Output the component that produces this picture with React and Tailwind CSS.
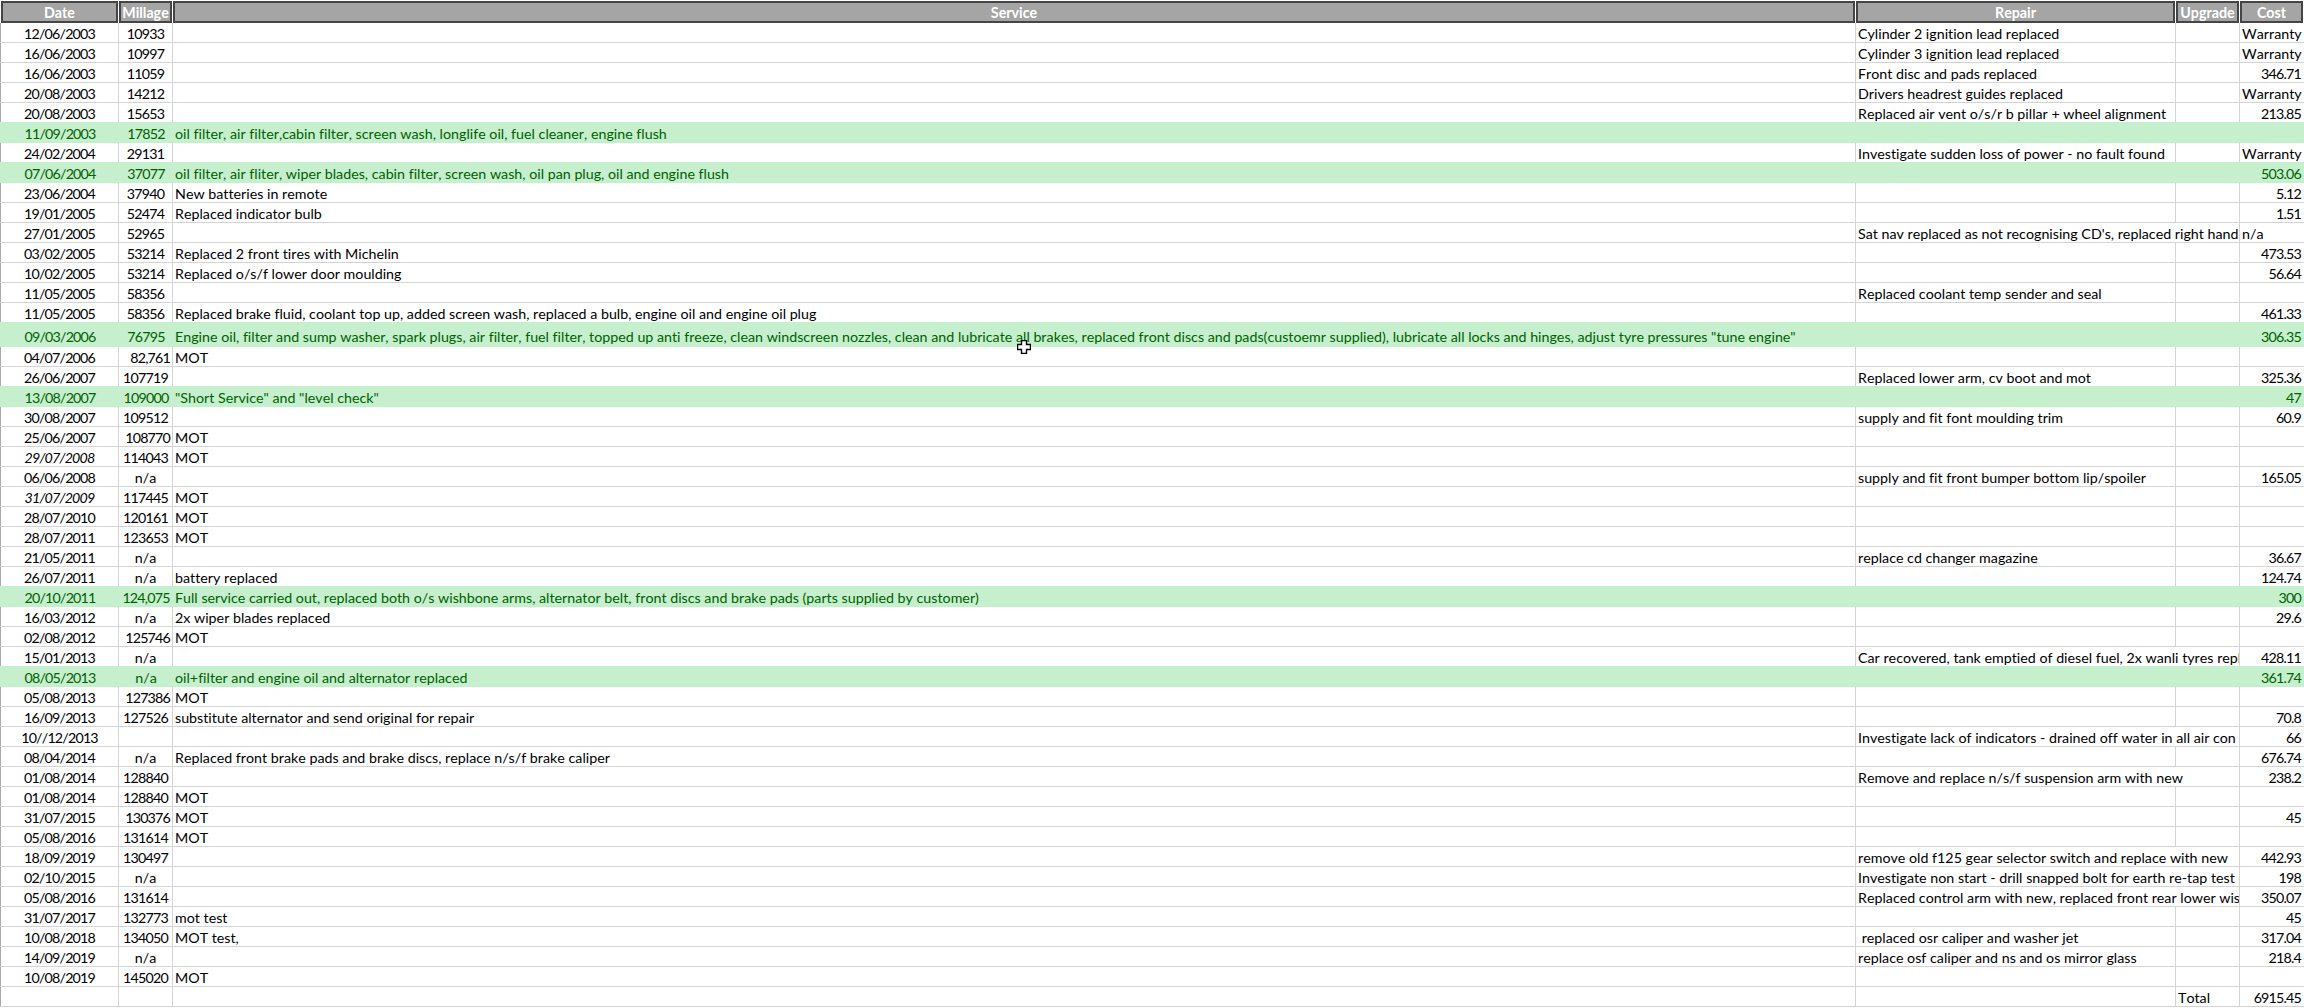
const COLS = 'grid grid-cols-[119px_54px_1683px_320px_64px_64px]';
const NUM = 'tracking-[-0.8px]';

// date, millage, service, repair, upgrade, cost + flags
const rows = [
  { d: '12/06/2003', m: '10933', r: 'Cylinder 2 ignition lead replaced', c: 'Warranty', cl: true },
  { d: '16/06/2003', m: '10997', r: 'Cylinder 3 ignition lead replaced', c: 'Warranty', cl: true },
  { d: '16/06/2003', m: '11059', r: 'Front disc and pads replaced', c: '346.71' },
  { d: '20/08/2003', m: '14212', r: 'Drivers headrest guides replaced', c: 'Warranty', cl: true },
  { d: '20/08/2003', m: '15653', r: 'Replaced air vent o/s/r b pillar + wheel alignment', c: '213.85' },
  { d: '11/09/2003', m: '17852', s: 'oil filter, air filter,cabin filter, screen wash, longlife oil, fuel cleaner, engine flush', good: true },
  { d: '24/02/2004', m: '29131', r: 'Investigate sudden loss of power - no fault found', c: 'Warranty', cl: true },
  { d: '07/06/2004', m: '37077', s: 'oil filter, air fliter, wiper blades, cabin filter, screen wash, oil pan plug, oil and engine flush', c: '503.06', good: true },
  { d: '23/06/2004', m: '37940', s: 'New batteries in remote', c: '5.12' },
  { d: '19/01/2005', m: '52474', s: 'Replaced indicator bulb', c: '1.51' },
  { d: '27/01/2005', m: '52965', r: "Sat nav replaced as not recognising CD's, replaced right hand lock", span: true, c: 'n/a', cl: true },
  { d: '03/02/2005', m: '53214', s: 'Replaced 2 front tires with Michelin', c: '473.53' },
  { d: '10/02/2005', m: '53214', s: 'Replaced o/s/f lower door moulding', c: '56.64' },
  { d: '11/05/2005', m: '58356', r: 'Replaced coolant temp sender and seal' },
  { d: '11/05/2005', m: '58356', s: 'Replaced brake fluid, coolant top up, added screen wash, replaced a bulb, engine oil and engine oil plug', c: '461.33' },
  { d: '09/03/2006', m: '76795', s: 'Engine oil, filter and sump washer, spark plugs, air filter, fuel filter, topped up anti freeze, clean windscreen nozzles, clean and lubricate all brakes, replaced front discs and pads(custoemr supplied), lubricate all locks and hinges, adjust tyre pressures "tune engine"', c: '306.35', good: true, tall: true },
  { d: '04/07/2006', m: '82,761', mr: true, s: 'MOT' },
  { d: '26/06/2007', m: '107719', r: 'Replaced lower arm, cv boot and mot', c: '325.36' },
  { d: '13/08/2007', m: '109000', s: '"Short Service" and "level check"', c: '47', good: true },
  { d: '30/08/2007', m: '109512', r: 'supply and fit font moulding trim', c: '60.9' },
  { d: '25/06/2007', m: '108770', mr: true, s: 'MOT' },
  { d: '29/07/2008', it: true, m: '114043', s: 'MOT' },
  { d: '06/06/2008', m: 'n/a', r: 'supply and fit front bumper bottom lip/spoiler', c: '165.05' },
  { d: '31/07/2009', it: true, m: '117445', s: 'MOT' },
  { d: '28/07/2010', m: '120161', s: 'MOT' },
  { d: '28/07/2011', m: '123653', s: 'MOT' },
  { d: '21/05/2011', m: 'n/a', r: 'replace cd changer magazine', c: '36.67' },
  { d: '26/07/2011', m: 'n/a', s: 'battery replaced', c: '124.74' },
  { d: '20/10/2011', m: '124,075', s: 'Full service carried out, replaced both o/s wishbone arms, alternator belt, front discs and brake pads (parts supplied by customer)', c: '300', good: true },
  { d: '16/03/2012', m: 'n/a', s: '2x wiper blades replaced', c: '29.6' },
  { d: '02/08/2012', m: '125746', mr: true, s: 'MOT' },
  { d: '15/01/2013', m: 'n/a', r: 'Car recovered, tank emptied of diesel fuel, 2x wanli tyres replaced', span: true, c: '428.11' },
  { d: '08/05/2013', m: 'n/a', s: 'oil+filter and engine oil and alternator replaced', c: '361.74', good: true },
  { d: '05/08/2013', m: '127386', mr: true, s: 'MOT' },
  { d: '16/09/2013', m: '127526', s: 'substitute alternator and send original for repair', c: '70.8' },
  { d: '10//12/2013', m: '', r: 'Investigate lack of indicators - drained off water in all air con pipes', span: true, c: '66' },
  { d: '08/04/2014', m: 'n/a', s: 'Replaced front brake pads and brake discs, replace n/s/f brake caliper', c: '676.74' },
  { d: '01/08/2014', m: '128840', r: 'Remove and replace n/s/f suspension arm with new', span: true, c: '238.2' },
  { d: '01/08/2014', m: '128840', s: 'MOT' },
  { d: '31/07/2015', m: '130376', mr: true, s: 'MOT', c: '45' },
  { d: '05/08/2016', m: '131614', s: 'MOT' },
  { d: '18/09/2019', m: '130497', r: 'remove old f125 gear selector switch and replace with new', span: true, c: '442.93' },
  { d: '02/10/2015', m: 'n/a', r: 'Investigate non start - drill snapped bolt for earth re-tap test circuit', span: true, c: '198' },
  { d: '05/08/2016', m: '131614', r: 'Replaced control arm with new, replaced front rear lower wishbone', span: true, c: '350.07' },
  { d: '31/07/2017', m: '132773', s: 'mot test', c: '45' },
  { d: '10/08/2018', m: '134050', s: 'MOT test,', r: ' replaced osr caliper and washer jet', c: '317.04' },
  { d: '14/09/2019', m: 'n/a', r: 'replace osf caliper and ns and os mirror glass', c: '218.4' },
  { d: '10/08/2019', m: '145020', s: 'MOT' },
  { d: '', m: '', u: 'Total', c: '6915.45' },
];

function HeaderCell({ children }) {
  return (
    <div className="h-[22px] border-2 border-[#454545] bg-[#a5a5a5] text-center text-white font-bold leading-[19px] overflow-hidden whitespace-nowrap">
      {children}
    </div>
  );
}

function Cell({ className = '', line, children }) {
  return (
    <div className={`flex items-end overflow-hidden whitespace-pre leading-[17px] ${line ? 'border-r border-[#d4d4d4]' : ''} ${className}`}>
      {children}
    </div>
  );
}

function Row({ row, nextGood }) {
  const g = row.good;
  const height = row.tall ? 'h-6 pb-px' : 'h-5';
  const bottom = g || nextGood ? 'border-[#c6efce]' : 'border-[#d4d4d4]';
  return (
    <div className={`${COLS} ${height} border-b ${bottom} ${g ? 'bg-[#c6efce] text-[#006100]' : 'text-black'}`}>
      <Cell line={!g} className={`justify-center border-l ${NUM} ${g ? 'border-l-[#c6efce]' : 'border-l-[#a9a9a9]'}`}>
        <span className={row.it ? 'italic' : ''}>{row.d}</span>
      </Cell>
      <Cell line={!g} className={`${row.m === 'n/a' ? '' : NUM} ${row.mr ? 'justify-end pr-[2px]' : 'justify-center'}`}>{row.m}</Cell>
      <Cell line={!g} className="pl-[2px]">{row.s}</Cell>
      {row.span ? (
        <Cell line={!g} className="col-span-2 pl-[2px]">{row.r}</Cell>
      ) : (
        <>
          <Cell line={!g} className="pl-[2px]">{row.r}</Cell>
          <Cell line={!g} className="pl-[2px]">{row.u}</Cell>
        </>
      )}
      <Cell className={row.cl ? 'pl-[2px]' : `justify-end pr-[3px] ${NUM}`}>{row.c}</Cell>
    </div>
  );
}

export default function App() {
  return (
    <div className="relative w-[2304px] h-[1008px] overflow-hidden bg-white font-['Lato',sans-serif] text-[14.26px] [font-variant-ligatures:none] [font-kerning:none]">
      <div className="grid grid-cols-[117px_53px_1682px_319px_63px_63px] h-[23px] pt-px gap-x-px pl-px">
        <HeaderCell>Date</HeaderCell>
        <HeaderCell>Millage</HeaderCell>
        <HeaderCell>Service</HeaderCell>
        <HeaderCell>Repair</HeaderCell>
        <HeaderCell>Upgrade</HeaderCell>
        <HeaderCell>Cost</HeaderCell>
      </div>
      {rows.map((row, i) => (
        <Row key={i} row={row} nextGood={rows[i + 1]?.good} />
      ))}
      {/* excel cross cursor */}
      <svg className="absolute left-[1017px] top-[340px]" width="14" height="14" viewBox="0 0 14 14">
        <path d="M4.5 .5h5v4h4v5h-4v4h-5v-4h-4v-5h4z" fill="#fff" stroke="#000" strokeWidth="1.4" />
      </svg>
    </div>
  );
}
